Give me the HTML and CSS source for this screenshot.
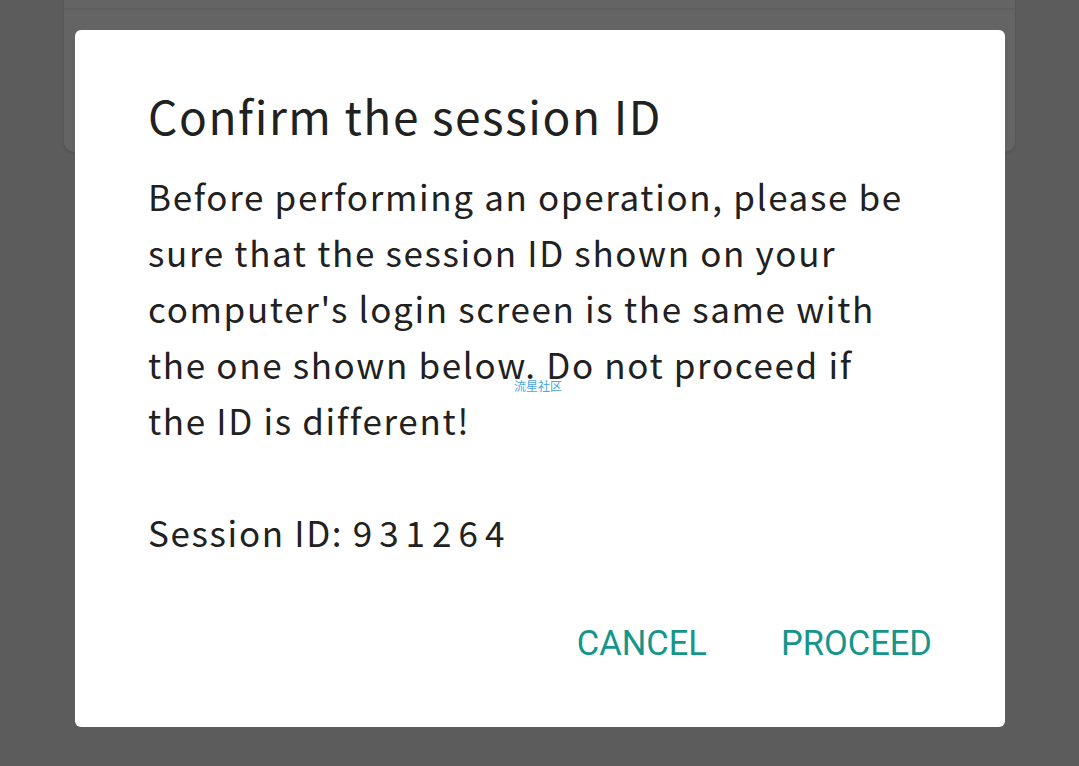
FILE: index.html
```html
<!DOCTYPE html>
<html lang="en">
<head>
    <meta charset="UTF-8">
    <meta name="viewport" content="width=device-width, initial-scale=1.0">
    <title>Confirm the session ID</title>
    <link rel="stylesheet" href="styles.css">
</head>
<body>
    <div class="page-card">
        <div class="page-card-line"></div>
    </div>

    <div class="dialog" role="dialog">
        <h2 class="dialog-title">Confirm the session ID</h2>
        <p class="dialog-text">Before performing an operation, please be sure that the session ID shown on your computer's login screen is the same with the one shown below. Do not proceed if the ID is different!<br><br>Session ID: <span class="session-id">931264</span></p>
        <div class="dialog-actions">
            <button class="action-btn">CANCEL</button>
            <button class="action-btn">PROCEED</button>
        </div>
        <span class="watermark">流星社区</span>
    </div>
</body>
</html>
```

FILE: styles.css
```css
body {
    margin: 0;
    height: 766px;
    overflow: hidden;
    background-color: #5c5c5c;
    font-family: "Noto Sans CJK JP", "Noto Sans", sans-serif;
}
.page-card {
    margin: -20px 64px 0 64px;
    height: 172px;
    background-color: #646464;
    border-radius: 0 0 10px 10px;
    box-shadow: 0 1px 3px rgba(0, 0, 0, 0.15);
}
.page-card-line {
    height: 28px;
    border-bottom: 2px solid #5e5e5e;
}
.dialog {
    position: fixed;
    left: 75px;
    top: 30px;
    width: 930px;
    height: 697px;
    box-sizing: border-box;
    padding: 55px 73px 0 73px;
    background-color: #fff;
    border-radius: 6px;
    color: #212121;
}
.dialog-title {
    margin: 0;
    font-size: 46px;
    font-weight: normal;
    line-height: 60px;
    letter-spacing: 1.6px;
}
.dialog-text {
    max-width: 762px;
    margin: 23px 0 0 0;
    font-size: 35px;
    line-height: 56px;
    letter-spacing: 1.65px;
}
.session-id {
    letter-spacing: 7px;
}
.dialog-actions {
    display: flex;
    justify-content: flex-end;
    gap: 74px;
    margin-top: 63px;
}
.action-btn {
    border: none;
    background: none;
    padding: 0;
    font-family: Roboto, "Liberation Sans", sans-serif;
    font-size: 34.5px;
    color: #16968a;
    cursor: pointer;
}
.watermark {
    position: absolute;
    left: 439px;
    top: 347px;
    font-size: 12px;
    color: #4aa3df;
}
```
